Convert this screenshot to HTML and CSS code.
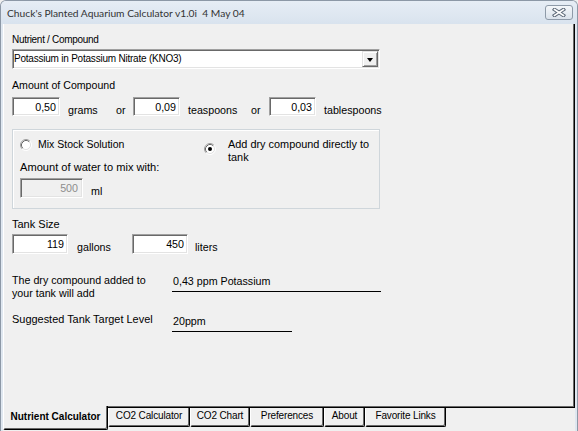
FILE: index.html
```html
<!DOCTYPE html>
<html lang="en">
<head>
<meta charset="utf-8">
<title>Chuck's Planted Aquarium Calculator</title>
<link rel="stylesheet" href="styles.css">
</head>
<body>
<div class="window">
  <div class="titlebar">
    <span class="title">Chuck's Planted Aquarium Calculator v1.0i&nbsp; 4 May 04</span>
    <span class="close">
      <svg width="14" height="9" viewBox="0 0 14 9">
        <path d="M2.5 1.5 L11.5 7.5 M11.5 1.5 L2.5 7.5" stroke="#5d6978" stroke-width="3.6" stroke-linecap="square" fill="none"/>
        <path d="M2.5 1.5 L11.5 7.5 M11.5 1.5 L2.5 7.5" stroke="#ffffff" stroke-width="1.6" stroke-linecap="square" fill="none"/>
      </svg>
    </span>
  </div>
  <div class="client">
    <div class="panel">
      <div class="lbl lbl-nutrient">Nutrient / Compound</div>
      <div class="combo">
        <span class="combo-text">Potassium in Potassium Nitrate (KNO3)</span>
        <span class="combo-btn"><span class="arrow"></span></span>
      </div>

      <div class="lbl lbl-amount">Amount of Compound</div>
      <div class="row row-amount">
        <input class="field f-amount1" value="0,50" readonly>
        <span class="unit u-grams">grams</span>
        <span class="unit u-or1">or</span>
        <input class="field f-amount" value="0,09" readonly>
        <span class="unit u-tsp">teaspoons</span>
        <span class="unit u-or2">or</span>
        <input class="field f-amount" value="0,03" readonly>
        <span class="unit u-tbsp">tablespoons</span>
      </div>

      <div class="group">
        <div class="gcol gcol1">
          <div class="radio-row">
            <svg class="radio r1" width="12" height="12" viewBox="0 0 12 12">
              <circle cx="6" cy="6" r="4.5" fill="#fff"/>
              <path d="M2.11 9.89 A5.5 5.5 0 0 1 9.89 2.11" stroke="#a0a0a0" fill="none"/>
              <path d="M9.89 2.11 A5.5 5.5 0 0 1 2.11 9.89" stroke="#ffffff" fill="none"/>
              <path d="M2.82 9.18 A4.5 4.5 0 0 1 9.18 2.82" stroke="#696969" fill="none"/>
              <path d="M9.18 2.82 A4.5 4.5 0 0 1 2.82 9.18" stroke="#e3e3e3" fill="none"/>
            </svg>
            <span class="radio-text">Mix Stock Solution</span>
          </div>
          <div class="lbl lbl-water">Amount of water to mix with:</div>
          <div class="row row-water">
            <input class="field field-dis" value="500" readonly>
            <span class="unit u-ml">ml</span>
          </div>
        </div>
        <div class="gcol gcol2">
          <div class="radio-row">
            <svg class="radio r2" width="12" height="12" viewBox="0 0 12 12">
              <circle cx="6" cy="6" r="4.5" fill="#fff"/>
              <path d="M2.11 9.89 A5.5 5.5 0 0 1 9.89 2.11" stroke="#a0a0a0" fill="none"/>
              <path d="M9.89 2.11 A5.5 5.5 0 0 1 2.11 9.89" stroke="#ffffff" fill="none"/>
              <path d="M2.82 9.18 A4.5 4.5 0 0 1 9.18 2.82" stroke="#696969" fill="none"/>
              <path d="M9.18 2.82 A4.5 4.5 0 0 1 2.82 9.18" stroke="#e3e3e3" fill="none"/>
              <circle cx="6" cy="6" r="2" fill="#000"/>
            </svg>
            <span class="radio-text radio-text2">Add dry compound directly to tank</span>
          </div>
        </div>
      </div>

      <div class="lbl lbl-tank">Tank Size</div>
      <div class="row row-tank">
        <input class="field f-tank" value="119" readonly>
        <span class="unit u-gallons">gallons</span>
        <input class="field f-tank" value="450" readonly>
        <span class="unit u-liters">liters</span>
      </div>

      <div class="row row-result">
        <div class="lbl res-label">The dry compound added to<br>your tank will add</div>
        <div class="value value-ppm">0,43 ppm Potassium</div>
      </div>

      <div class="row row-target">
        <div class="lbl res-label lbl-target">Suggested Tank Target Level</div>
        <div class="value value-target">20ppm</div>
      </div>
    </div>

    <div class="tabs">
      <div class="tab tab-active">Nutrient Calculator</div>
      <div class="tab t-co2">CO2 Calculator</div>
      <div class="tab t-chart">CO2 Chart</div>
      <div class="tab t-pref">Preferences</div>
      <div class="tab t-about">About</div>
      <div class="tab t-links">Favorite Links</div>
    </div>
  </div>
</div>
</body>
</html>
```

FILE: styles.css
```css
html, body {
  margin: 0;
  padding: 0;
}

body {
  width: 578px;
  height: 431px;
  overflow: hidden;
  background: #f0f0f0;
  font-family: "Liberation Sans", Arial, sans-serif;
  font-size: 10.7px;
  color: #000;
}

.window {
  box-sizing: border-box;
  width: 578px;
  height: 431px;
  background: #dfe7f0;
  border: 1px solid #8c98a6;
  border-bottom: none;
  border-radius: 6px 6px 0 0;
  display: flex;
  flex-direction: column;
}

.titlebar {
  height: 23px;
  flex: none;
  display: flex;
  align-items: flex-start;
  padding: 0 4px 0 6px;
  background: linear-gradient(#e6edf5, #d9e3ee);
  border-radius: 5px 5px 0 0;
}

.title {
  flex: 1;
  font-family: Lato, "Open Sans", sans-serif;
  font-size: 10.25px;
  line-height: 15px;
  padding-top: 4.8px;
  color: #333;
  white-space: nowrap;
}

.close {
  margin-top: 4px;
  width: 28px;
  height: 15px;
  box-sizing: border-box;
  border: 1px solid #8e9aa8;
  border-radius: 3px;
  background: linear-gradient(#f4f7fa, #dae2eb);
  display: flex;
  align-items: center;
  justify-content: center;
}

.client {
  flex: 1;
  margin: 0 2px;
  background: #f0f0f0;
  display: flex;
  flex-direction: column;
}

.panel {
  box-sizing: border-box;
  height: 384px;
  flex: none;
  border-left: 1px solid #fff;
  border-right: 1px solid #000;
  border-bottom: 1px solid #000;
  box-shadow: inset -1px -1px 0 #696969;
  padding: 9px 0 0 8px;
}

.lbl {
  line-height: 13px;
  white-space: nowrap;
}

.lbl-nutrient {
  font-size: 10px;
  letter-spacing: -0.3px;
}

.combo {
  margin-top: 3px;
  width: 368px;
  height: 20px;
  box-sizing: border-box;
  background: #fff;
  border: 1px solid;
  border-color: #a0a0a0 #fff #fff #a0a0a0;
  box-shadow: inset 1px 1px 0 #696969, inset -1px -1px 0 #e3e3e3;
  padding: 1px;
  display: flex;
}

.combo-text {
  flex: 1;
  font-size: 10px;
  letter-spacing: -0.22px;
  line-height: 16px;
  white-space: nowrap;
}

.combo-btn {
  width: 16px;
  height: 16px;
  box-sizing: border-box;
  background: #f0f0f0;
  border: 1px solid;
  border-color: #e3e3e3 #696969 #696969 #e3e3e3;
  box-shadow: inset 1px 1px 0 #fff, inset -1px -1px 0 #a0a0a0;
  display: flex;
  align-items: center;
  justify-content: center;
}

.arrow {
  width: 0;
  height: 0;
  margin-top: 1px;
  border-left: 3.5px solid transparent;
  border-right: 3.5px solid transparent;
  border-top: 4px solid #000;
}

.lbl-amount {
  margin-top: 10px;
  font-size: 10.6px;
}

.row {
  display: flex;
  align-items: flex-start;
}

.row-amount {
  margin-top: 5px;
}

.field {
  box-sizing: border-box;
  margin: 0;
  height: 19px;
  padding: 0 3px 0 2px;
  border: 1px solid;
  border-color: #a0a0a0 #fff #fff #a0a0a0;
  box-shadow: inset 1px 1px 0 #696969, inset -1px -1px 0 #e3e3e3;
  background: #fff;
  font-family: "Liberation Sans", Arial, sans-serif;
  font-size: 10.7px;
  color: #000;
  text-align: right;
  outline: none;
}

.f-amount1 {
  width: 48px;
}

.f-amount {
  width: 47px;
}

.unit {
  margin-top: 7px;
  line-height: 13px;
  white-space: nowrap;
}

.u-grams {
  margin-left: 8px;
  width: 48px;
}

.u-or1 {
  width: 17px;
}

.u-tsp {
  margin-left: 8px;
  width: 63px;
}

.u-or2 {
  width: 18px;
}

.u-tbsp {
  margin-left: 8px;
}

.group {
  margin-top: 12px;
  width: 368px;
  height: 80px;
  box-sizing: border-box;
  border: 1px solid #cfd6db;
  box-shadow: inset 1px 1px 0 #fff;
  padding: 8px 0 0 7px;
  display: flex;
}

.gcol1 {
  width: 184px;
}

.radio-row {
  display: flex;
  align-items: flex-start;
  line-height: 13px;
}

.radio {
  flex: none;
  display: block;
}

.r1 {
  margin-top: 1px;
  margin-right: 6px;
}

.r2 {
  margin-top: 5px;
  margin-right: 12px;
}

.radio-text {
  white-space: nowrap;
  font-size: 10.5px;
}

.radio-text2 {
  white-space: normal;
  width: 148px;
  font-size: 10.9px;
  line-height: 13.3px;
}

.lbl-water {
  margin-top: 10px;
  font-size: 11.1px;
}

.row-water {
  margin-top: 4px;
}

.field-dis {
  width: 63px;
  height: 20px;
  background: #f0f0f0;
  color: #8d8d8d;
  padding-right: 4px;
}

.u-ml {
  margin-left: 8px;
}

.lbl-tank {
  margin-top: 9px;
  font-size: 11px;
}

.row-tank {
  margin-top: 3px;
}

.f-tank {
  width: 56px;
  height: 20px;
}

.u-gallons {
  margin-left: 9px;
  width: 55px;
}

.u-liters {
  margin-left: 7px;
}

.row-result {
  margin-top: 20px;
}

.res-label {
  width: 160px;
}

.lbl-target {
  font-size: 10.95px;
}

.value {
  box-sizing: border-box;
  line-height: 13px;
  padding: 0 0 3px 1px;
  border-bottom: 1px solid #000;
  white-space: nowrap;
}

.value-ppm {
  margin-top: 1.4px;
  width: 209px;
}

.row-target {
  margin-top: 13px;
}

.value-target {
  margin-top: 2.3px;
  width: 120px;
}

.tabs {
  display: flex;
  align-items: flex-start;
  margin-top: -2px;
}

.tab {
  box-sizing: border-box;
  height: 19px;
  margin-top: 2px;
  padding-top: 2px;
  font-size: 10px;
  letter-spacing: -0.15px;
  line-height: 12px;
  text-align: center;
  white-space: nowrap;
  background: #f0f0f0;
  border-left: 1px solid #fff;
  border-right: 1px solid #000;
  border-bottom: 1px solid #000;
  border-radius: 0 0 2px 2px;
  box-shadow: inset -1px -1px 0 #696969;
}

.tab-active {
  position: relative;
  z-index: 1;
  width: 105px;
  height: 24px;
  margin-top: 0;
  padding-top: 5px;
  font-weight: bold;
  letter-spacing: 0;
}

.t-co2 {
  width: 82px;
}

.t-chart {
  width: 60px;
}

.t-pref {
  width: 74px;
}

.t-about {
  width: 41px;
}

.t-links {
  width: 81px;
}
```
